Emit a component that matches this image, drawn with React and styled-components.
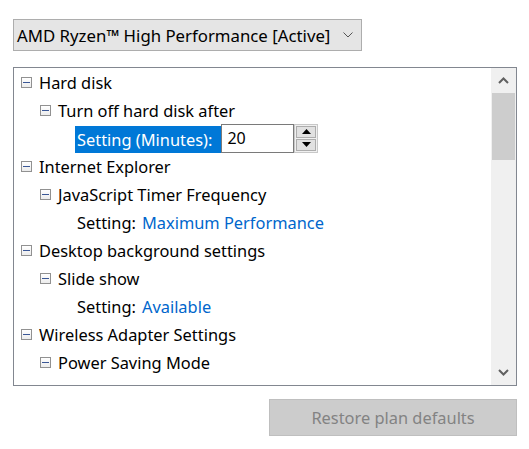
import React from "react";
import styled, { createGlobalStyle } from "styled-components";

const GlobalStyle = createGlobalStyle`
  html, body {
    margin: 0;
    padding: 0;
    background: #ffffff;
  }
  body {
    font-family: "Noto Sans", "Open Sans", sans-serif;
  }
`;

const Root = styled.div`
  width: 529px;
  height: 449px;
  box-sizing: border-box;
  padding: 19px 12px 0 13px;
  display: flex;
  flex-direction: column;
  background: #ffffff;
`;

const PlanSelect = styled.div`
  align-self: flex-start;
  width: 349px;
  height: 32px;
  box-sizing: border-box;
  display: flex;
  align-items: center;
  justify-content: space-between;
  padding: 0 8px 0 3px;
  background: #e5e5e5;
  border: 1px solid #adadad;
  font-size: 16.8px;
  color: #000;
  white-space: nowrap;
`;

const Tree = styled.div`
  margin-top: 16px;
  height: 319px;
  box-sizing: border-box;
  border: 1px solid #828790;
  display: flex;
  overflow: hidden;
`;

const TreeBody = styled.div`
  flex: 1;
  overflow: hidden;
`;

/* rows without a toggle box line up with the labels of their parent's children */
const Row = styled.div`
  height: 28px;
  display: flex;
  align-items: center;
  padding-left: ${p => 7 + p.level * 19 + (p.leaf ? 18 : 0)}px;
  font-size: 16.4px;
  color: #000;
  white-space: nowrap;
`;

const Toggle = styled.span`
  width: 11px;
  height: 11px;
  box-sizing: border-box;
  border: 1px solid #919191;
  background: linear-gradient(#ffffff, #ececec);
  position: relative;
  margin-right: 7px;
  flex-shrink: 0;

  &::after {
    content: "";
    position: absolute;
    left: 1px;
    right: 1px;
    top: 4px;
    height: 1px;
    background: #3a5796;
  }
`;

const Label = styled.span``;

const Value = styled.span`
  color: #0066cc;
  margin-left: 6px;
`;

const Selected = styled.span`
  height: 27px;
  display: flex;
  align-items: center;
  padding: 0 9px 0 2px;
  background: #0078d7;
  color: #ffffff;
  margin-left: -2px;
  margin-top: 2px;
`;

const NumberBox = styled.div`
  width: 73px;
  height: 29px;
  box-sizing: border-box;
  border: 1px solid #7a7a7a;
  background: #fff;
  display: flex;
  align-items: center;
  padding-left: 5px;
  font-size: 16px;
`;

const Spinner = styled.div`
  width: 24px;
  height: 29px;
  box-sizing: border-box;
  border: 1px solid #c8c8c8;
  display: flex;
  flex-direction: column;
  gap: 1px;
  padding: 1px;
  background: #f0f0f0;
`;

const SpinButton = styled.div`
  flex: 1;
  border: 1px solid #adadad;
  background: #e1e1e1;
  display: flex;
  align-items: center;
  justify-content: center;
`;

const ScrollBar = styled.div`
  width: 25px;
  background: #f0f0f0;
  display: flex;
  flex-direction: column;
  align-items: center;
`;

const ScrollArrow = styled.div`
  height: 25px;
  width: 100%;
  display: flex;
  align-items: center;
  justify-content: center;
`;

const Track = styled.div`
  flex: 1;
  width: 100%;
  padding: 0 1px;
  box-sizing: border-box;
`;

const Thumb = styled.div`
  height: 67px;
  background: #cdcdcd;
`;

const Footer = styled.div`
  margin-top: 13px;
  display: flex;
  justify-content: flex-end;
`;

const RestoreButton = styled.button`
  width: 248px;
  height: 37px;
  border: 1px solid #bfbfbf;
  background: #cccccc;
  color: #838383;
  font-family: "Noto Sans", "Open Sans", sans-serif;
  font-size: 16.4px;
  padding: 0;
`;

const Chevron = ({ up }) => (
  <svg width="11" height="7" viewBox="0 0 11 7">
    <path
      d={up ? "M1 6 L5.5 1.5 L10 6" : "M1 1 L5.5 5.5 L10 1"}
      fill="none"
      stroke="#606060"
      strokeWidth="2"
    />
  </svg>
);

const Triangle = ({ up }) => (
  <svg width="9" height="5" viewBox="0 0 9 5">
    <path d={up ? "M0 5 L4.5 0 L9 5 Z" : "M0 0 L4.5 5 L9 0 Z"} fill="#000" />
  </svg>
);

const tree = [
  { level: 0, text: "Hard disk" },
  { level: 1, text: "Turn off hard disk after" },
  { level: 2, leaf: true, edit: true, text: "Setting (Minutes):", value: "20" },
  { level: 0, text: "Internet Explorer" },
  { level: 1, text: "JavaScript Timer Frequency" },
  { level: 2, leaf: true, text: "Setting:", value: "Maximum Performance" },
  { level: 0, text: "Desktop background settings" },
  { level: 1, text: "Slide show" },
  { level: 2, leaf: true, text: "Setting:", value: "Available" },
  { level: 0, text: "Wireless Adapter Settings" },
  { level: 1, text: "Power Saving Mode" },
  { level: 2, leaf: true, text: "Setting:", value: "Maximum Performance" },
];

const App = () => {
  return (
    <Root>
      <GlobalStyle />
      <PlanSelect>
        <span>AMD Ryzen™ High Performance [Active]</span>
        <svg width="10" height="6" viewBox="0 0 10 6">
          <path d="M0.5 0.5 L5 5 L9.5 0.5" fill="none" stroke="#555" strokeWidth="1" />
        </svg>
      </PlanSelect>

      <Tree>
        <TreeBody>
          {tree.map((item, i) => (
            <Row key={i} level={item.level} leaf={item.leaf}>
              {!item.leaf && <Toggle />}
              {item.edit ? (
                <>
                  <Selected>{item.text}</Selected>
                  <NumberBox>{item.value}</NumberBox>
                  <Spinner>
                    <SpinButton><Triangle up /></SpinButton>
                    <SpinButton><Triangle /></SpinButton>
                  </Spinner>
                </>
              ) : (
                <>
                  <Label>{item.text}</Label>
                  {item.value && <Value>{item.value}</Value>}
                </>
              )}
            </Row>
          ))}
        </TreeBody>
        <ScrollBar>
          <ScrollArrow><Chevron up /></ScrollArrow>
          <Track>
            <Thumb />
          </Track>
          <ScrollArrow><Chevron /></ScrollArrow>
        </ScrollBar>
      </Tree>

      <Footer>
        <RestoreButton disabled>Restore plan defaults</RestoreButton>
      </Footer>
    </Root>
  );
};

export default App;
